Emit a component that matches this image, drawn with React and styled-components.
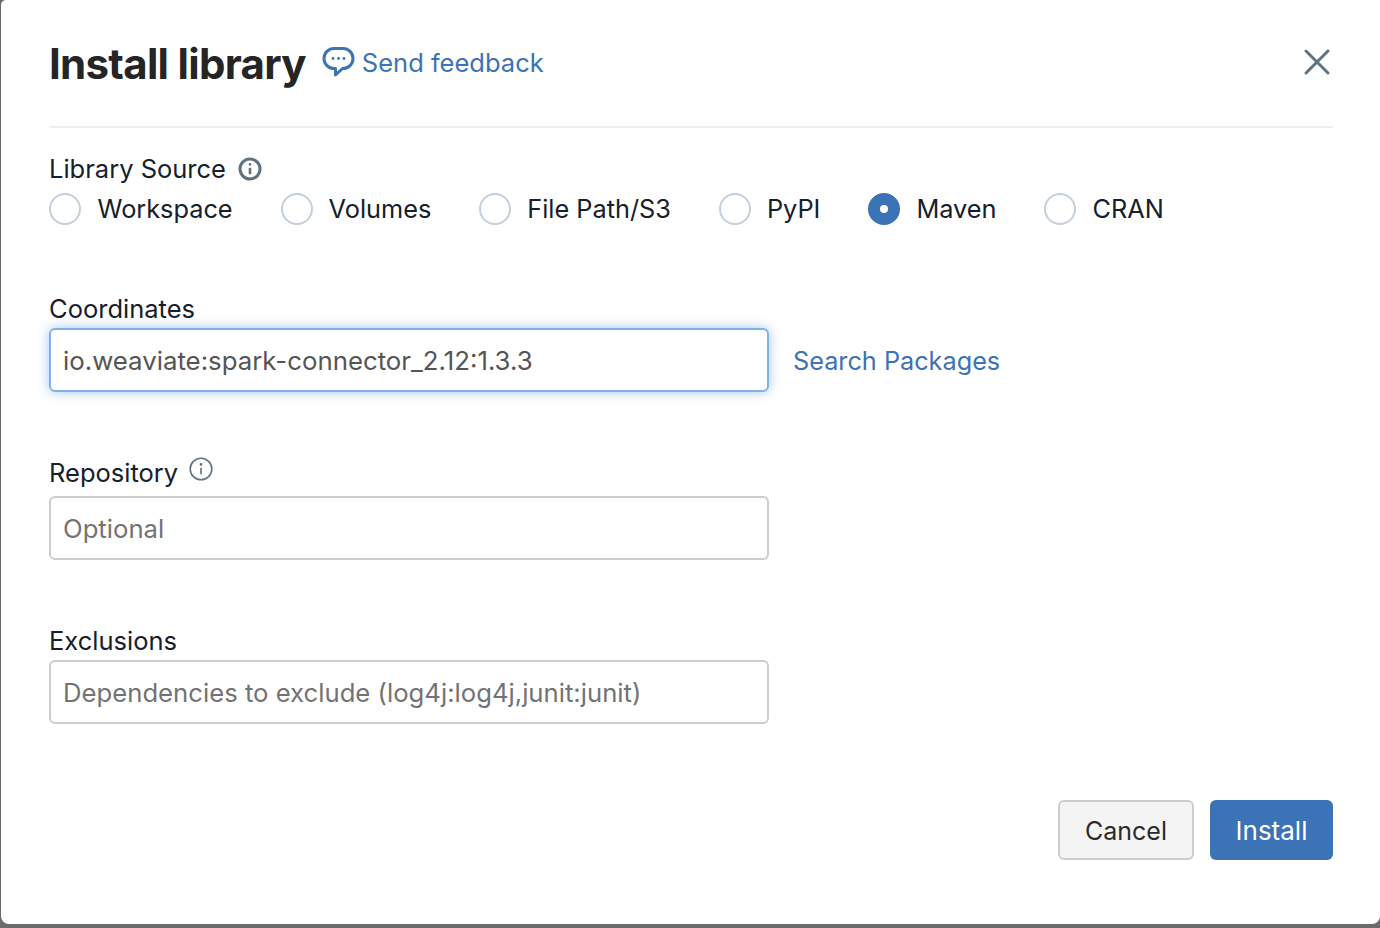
import React from 'react';
import styled, { createGlobalStyle } from 'styled-components';

const GlobalStyle = createGlobalStyle`
  html, body {
    margin: 0;
    padding: 0;
    height: 100%;
    overflow: hidden;
    background: #6b6b6b;
    font-family: Inter, "Liberation Sans", sans-serif;
  }
`;

const Page = styled.div`
  width: 1380px;
  height: 928px;
  padding: 0 0 4px 1px;
  box-sizing: border-box;
`;

const Dialog = styled.div`
  height: 924px;
  box-sizing: border-box;
  padding: 0 47px 0 48px;
  background: #fff;
  border-radius: 5px 0 8px 8px;
  display: flex;
  flex-direction: column;
`;

const Header = styled.header`
  height: 128px;
  box-sizing: border-box;
  padding-bottom: 2px;
  display: flex;
  align-items: center;
  border-bottom: 2px solid #eeeeee;
`;

const Title = styled.h1`
  margin: 2px 0 0;
  font-size: 42px;
  font-weight: 700;
  letter-spacing: -0.7px;
  color: #252525;
`;

const FeedbackLink = styled.a`
  margin-left: 16px;
  display: flex;
  align-items: center;
  gap: 7px;
  font-size: 25.5px;
  color: #3b73b5;
`;

const CloseButton = styled.button`
  margin-left: auto;
  margin-right: 2px;
  padding: 0;
  border: 0;
  background: none;
  display: flex;
`;

const Label = styled.label`
  display: flex;
  align-items: center;
  font-size: 25.5px;
  line-height: 30px;
  color: #15202b;
`;

const SourceLabel = styled(Label)`
  margin-top: 26px;
  gap: 12px;
`;

const RadioRow = styled.div`
  margin-top: 9px;
  display: flex;
  align-items: center;
  gap: 48px;
`;

const RadioItem = styled.div`
  display: flex;
  align-items: center;
  gap: 16px;
  font-size: 25.3px;
  line-height: 30px;
  color: #15202b;
  &:first-child {
    gap: 16.5px;
  }
`;

const RadioCircle = styled.span`
  width: 32px;
  height: 32px;
  box-sizing: border-box;
  border-radius: 50%;
  border: ${p => (p.$checked ? '0' : '2px solid #c3cfdb')};
  background: ${p => (p.$checked ? '#3b73b5' : '#fff')};
  display: flex;
  align-items: center;
  justify-content: center;
  &::after {
    content: '';
    display: ${p => (p.$checked ? 'block' : 'none')};
    width: 8px;
    height: 8px;
    border-radius: 50%;
    background: #fff;
  }
`;

const Field = styled.div`
  margin-top: ${p => p.$top}px;
  display: flex;
  flex-direction: column;
  gap: ${p => p.$gap}px;
`;

const InputRow = styled.div`
  display: flex;
  align-items: center;
  gap: 24px;
`;

const Input = styled.input`
  width: 720px;
  height: 64px;
  box-sizing: border-box;
  padding: 0 12px;
  border-radius: 6px;
  border: 2px solid ${p => (p.$focused ? '#7fb2e8' : '#cdcdcd')};
  box-shadow: ${p => (p.$focused ? '0 0 12px rgba(90, 150, 225, 0.55)' : 'none')};
  outline: none;
  background: #fff;
  font-family: inherit;
  font-size: ${p => (p.$focused ? 25.8 : 25.7)}px;
  color: #555;
  &::placeholder {
    color: #737373;
    opacity: 1;
  }
`;

const SearchLink = styled.a`
  padding-top: 2px;
  font-size: 25.25px;
  color: #3b73b5;
`;

const RepoLabel = styled(Label)`
  gap: 11px;
`;

const InfoWrap = styled.span`
  display: flex;
  position: relative;
  top: ${p => p.$lift || 0}px;
`;

const Footer = styled.footer`
  margin-top: 76px;
  display: flex;
  justify-content: flex-end;
  gap: 16px;
`;

const Button = styled.button`
  height: 60px;
  box-sizing: border-box;
  padding: ${p => (p.$primary ? '0' : '2px 0 0')};
  width: ${p => p.$width}px;
  border-radius: 6px;
  border: ${p => (p.$primary ? '0' : '2px solid #cdcdcd')};
  background: ${p => (p.$primary ? '#3c72b6' : '#f4f4f4')};
  color: ${p => (p.$primary ? '#fff' : '#2b2b2b')};
  font-family: inherit;
  font-size: ${p => (p.$primary ? 26 : 25)}px;
`;

function InfoIcon({ bold }) {
  return (
    <svg width="24" height="24" viewBox="0 0 24 24" fill="none" stroke="#5f7281">
      <circle cx="12" cy="12" r={bold ? 10 : 10.8} strokeWidth={bold ? 3 : 1.6} />
      <path d="M12 10.8v6.4" strokeWidth={bold ? 2.6 : 1.6} />
      <circle cx="12" cy="7.4" r="1.3" fill="#5f7281" stroke="none" />
    </svg>
  );
}

function FeedbackIcon() {
  return (
    <svg width="33" height="32" viewBox="0 0 33 32" fill="none">
      <path
        d="M12 2.500h9a10 10 0 0 1 0 20h-0.500l-7 6.500v-6.500H12a10 10 0 0 1 0-20z"
        stroke="#3b73b5"
        strokeWidth="3"
        strokeLinejoin="round"
      />
      <circle cx="11" cy="12.500" r="1.400" fill="#3b73b5" />
      <circle cx="16.500" cy="12.500" r="1.400" fill="#3b73b5" />
      <circle cx="22" cy="12.500" r="1.400" fill="#3b73b5" />
    </svg>
  );
}

function CloseIcon() {
  return (
    <svg width="28" height="28" viewBox="0 0 28 28" fill="none" stroke="#5f7281" strokeWidth="3" strokeLinecap="round">
      <path d="M3 3l22 22M25 3L3 25" />
    </svg>
  );
}

const sources = ['Workspace', 'Volumes', 'File Path/S3', 'PyPI', 'Maven', 'CRAN'];

export default function App() {
  return (
    <Page>
      <GlobalStyle />
      <Dialog>
        <Header>
          <Title>Install library</Title>
          <FeedbackLink>
            <FeedbackIcon />
            Send feedback
          </FeedbackLink>
          <CloseButton>
            <CloseIcon />
          </CloseButton>
        </Header>

        <SourceLabel>
          Library Source
          <InfoIcon bold />
        </SourceLabel>
        <RadioRow>
          {sources.map(name => (
            <RadioItem key={name}>
              <RadioCircle $checked={name === 'Maven'} />
              {name}
            </RadioItem>
          ))}
        </RadioRow>

        <Field $top={69} $gap={4}>
          <Label>Coordinates</Label>
          <InputRow>
            <Input $focused readOnly value="io.weaviate:spark-connector_2.12:1.3.3" />
            <SearchLink>Search Packages</SearchLink>
          </InputRow>
        </Field>

        <Field $top={66} $gap={8}>
          <RepoLabel>
            Repository
            <InfoWrap $lift={-4}>
              <InfoIcon />
            </InfoWrap>
          </RepoLabel>
          <Input readOnly placeholder="Optional" />
        </Field>

        <Field $top={66} $gap={4}>
          <Label>Exclusions</Label>
          <Input readOnly placeholder="Dependencies to exclude (log4j:log4j,junit:junit)" />
        </Field>

        <Footer>
          <Button $width={136}>Cancel</Button>
          <Button $primary $width={123}>Install</Button>
        </Footer>
      </Dialog>
    </Page>
  );
}
